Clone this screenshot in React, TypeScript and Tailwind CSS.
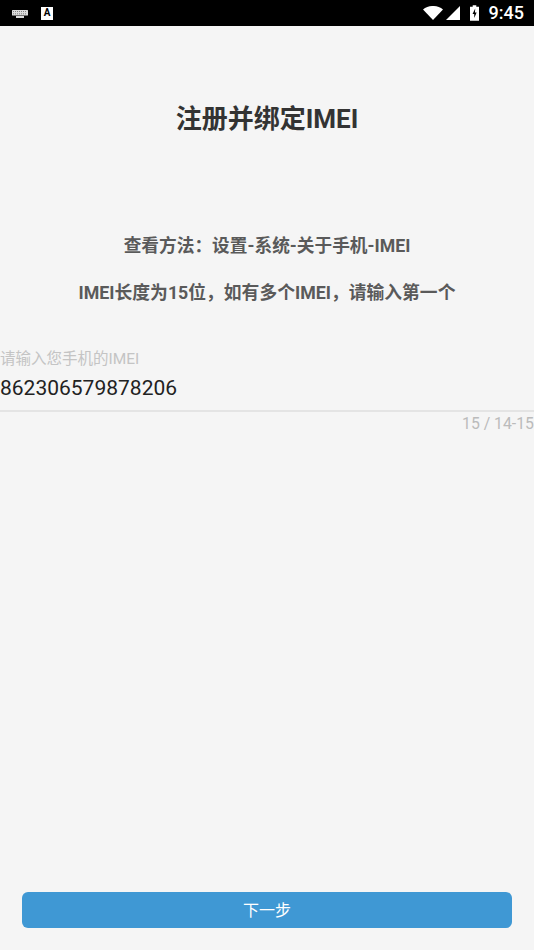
export default function App() {
  const font = { fontFamily: 'Roboto, "Noto Sans CJK SC", sans-serif' };
  return (
    <div style={font} className="w-[534px] h-[950px] bg-[#f5f5f5] flex flex-col overflow-hidden">
      <div className="h-[26px] bg-black flex items-center justify-between shrink-0">
        <div className="flex items-center gap-[13px] pl-[12px]">
          <svg width="16" height="8" viewBox="0 0 16 8" className="mt-[1px]">
            <rect x="0" y="0" width="16" height="5.500" rx="0.5" fill="#ddd" />
            <rect x="4" y="6" width="8" height="2" fill="#ddd" />
            <path d="M1 1.500h14M1 3.800h14" stroke="#444" strokeWidth="0.6" strokeDasharray="1 1" />
          </svg>
          <div className="relative w-[12px] h-[13px] bg-white flex items-center justify-center text-black text-[10px] font-bold leading-none">A</div>
        </div>
        <div className="flex items-center pr-[10px]">
          <svg width="20" height="14" viewBox="0 0 20 14" className="mr-[3px]">
            <path d="M0 3.500C5.500 -1.200 14.500 -1.200 20 3.500L10 14Z" fill="#fff" />
          </svg>
          <svg width="14" height="14" viewBox="0 0 14 14" className="mr-[10px]">
            <path d="M14 0V14H0Z" fill="#fff" />
          </svg>
          <svg width="9" height="16" viewBox="0 0 10 17" className="mr-[10px]">
            <path d="M3 0h4v1.500h3V17H0V1.500h3Z" fill="#fff" />
            <path d="M5.800 3.500L2.800 9.500H4.700V14L7.400 8H5.500Z" fill="#000" />
          </svg>
          <span className="text-white text-[18px] font-medium leading-none">9:45</span>
        </div>
      </div>

      <h1 className="mt-[76px] text-center text-[26px] leading-[34px] font-bold text-[#333333]">注册并绑定IMEI</h1>

      <p className="mt-[98px] text-center text-[17.7px] leading-[24px] font-bold text-[#5a5a5a]">查看方法：设置-系统-关于手机-IMEI</p>
      <p className="mt-[23px] text-center text-[17.8px] leading-[24px] font-bold text-[#5a5a5a]">IMEI长度为15位，如有多个IMEI，请输入第一个</p>

      <div className="mt-[43px] text-[15.5px] leading-[22px] text-[#c4c4c4]">请输入您手机的IMEI</div>
      <div className="mt-[4px] text-[21px] leading-[28px] text-[#222222]">862306579878206</div>
      <div className="mt-[8px] h-[2px] bg-[#e4e4e4]" />
      <div className="mt-[2px] text-right text-[15.8px] leading-[20px] text-[#bbbbbb]">15 / 14-15</div>

      <div className="flex-1" />
      <div className="px-[22px] pb-[22px]">
        <button className="w-full h-[36px] pt-[2px] rounded-[6px] bg-[#3f98d4] text-white text-[16px] flex items-center justify-center">下一步</button>
      </div>
    </div>
  );
}
